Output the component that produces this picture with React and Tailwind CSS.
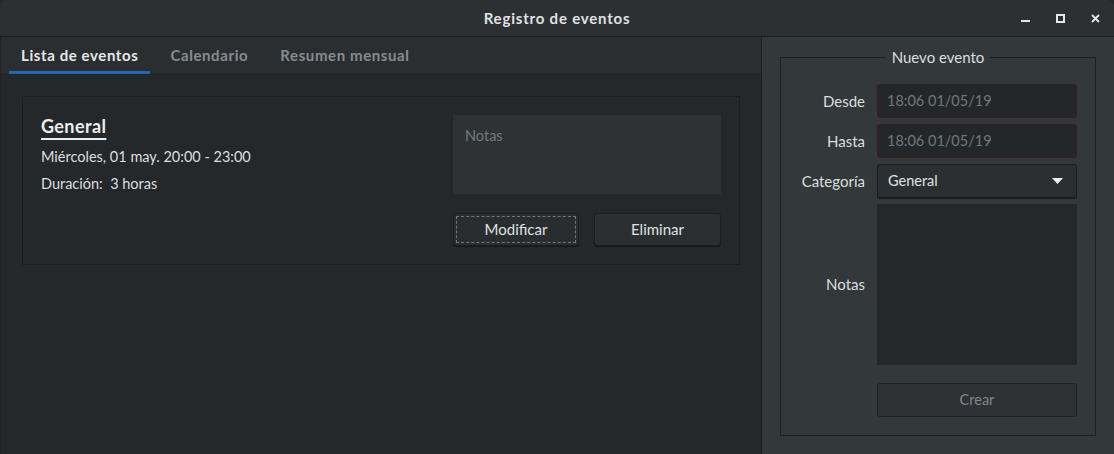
import React from "react";

const font = { fontFamily: "Lato, 'Noto Sans', sans-serif" };

const Field = ({ label, children, className = "" }) => (
  <div className={`flex items-center gap-3 ${className}`}>
    <span className="w-[84px] text-right text-[15px] text-[#dcdedf]">{label}</span>
    {children}
  </div>
);

const App = () => {
  return (
    <div
      className="w-[1114px] h-[454px] flex flex-col bg-[#25282b] text-[#dcdedf] overflow-hidden"
      style={font}
    >
      {/* Title bar */}
      <div className="relative h-[37px] shrink-0 bg-[#2d3033] border-b border-[#1a1c1e] rounded-t-[6px] flex items-center justify-center">
        <span className="text-[15px] font-bold tracking-[0.8px] text-[#e0e2e3]">Registro de eventos</span>
        <div className="absolute right-[14px] top-0 h-full flex items-center gap-[26px]">
          <svg width="9" height="9" viewBox="0 0 9 9">
            <rect x="0" y="6" width="9" height="2" fill="#e6e6e6" />
          </svg>
          <svg width="9" height="9" viewBox="0 0 9 9">
            <rect x="1" y="1" width="7" height="7" fill="none" stroke="#e6e6e6" strokeWidth="2" />
          </svg>
          <svg width="9" height="9" viewBox="0 0 9 9">
            <path d="M1 1 L8 8 M8 1 L1 8" stroke="#e6e6e6" strokeWidth="1.8" />
          </svg>
        </div>
      </div>

      <div className="flex flex-1 min-h-0">
        {/* Left pane */}
        <div className="w-[762px] shrink-0 flex flex-col border-r border-[#1c1f21] border-l border-l-[#202325]">
          <div className="h-[38px] shrink-0 bg-[#2b2e31] border-b border-[#1f2225] flex items-stretch pl-[8px] gap-2">
            <div className="px-3 flex items-center border-b-[3px] border-[#2766b2] pt-[3px] text-[15px] font-bold tracking-[0.6px] text-[#e6e8e9]">
              Lista de eventos
            </div>
            <div className="px-3 flex items-center text-[15px] font-bold tracking-[0.6px] text-[#878c90]">Calendario</div>
            <div className="px-3 flex items-center text-[15px] font-bold tracking-[0.6px] text-[#878c90]">Resumen mensual</div>
          </div>

          <div className="pl-[21px] pt-[21px]">
            <div className="w-[718px] h-[169px] border border-[#1b1e20] flex justify-between pl-[18px] pr-[18px] pt-[18px]">
              <div className="flex flex-col">
                <span className="text-[18px] font-bold tracking-[0.4px] text-[#eceeef] underline decoration-2 underline-offset-[5px] leading-[22px]">
                  General
                </span>
                <span className="mt-[10px] text-[14.5px] leading-[20px]">Miércoles, 01 may. 20:00 - 23:00</span>
                <span className="mt-[7px] text-[14.5px] leading-[20px]">Duración:&nbsp; 3 horas</span>
              </div>
              <div className="flex flex-col w-[268px]">
                <div className="h-[79px] bg-[#2e3235] px-3 pt-[10px] text-[14.5px] text-[#737a7e]">Notas</div>
                <div className="flex justify-between mt-[19px]">
                  <button className="w-[126px] h-[33px] rounded-[3px] bg-[#2a2d30] border border-[#1a1c1e] shadow-[0_1px_0_#17191a] p-[2px] text-[15px] text-[#dfe1e2]">
                    <div className="w-full h-full border border-dashed border-[#70767a] flex items-center justify-center">
                      Modificar
                    </div>
                  </button>
                  <button className="w-[127px] h-[33px] rounded-[3px] bg-[#2b2f32] border border-[#1a1c1e] shadow-[0_1px_0_#17191a] text-[15px] text-[#dfe1e2]">
                    Eliminar
                  </button>
                </div>
              </div>
            </div>
          </div>
        </div>

        {/* Right pane */}
        <div className="flex-1 bg-[#33383b] pl-[18px] pr-[18px] pt-[10px] pb-[18px] flex">
          <fieldset className="w-[316px] border border-[#1e2123] pb-[18px]">
            <legend className="mx-auto px-[6px] text-[15px] leading-[20px] text-[#dcdedf]">Nuevo evento</legend>
            <div className="flex flex-col gap-[6px] pt-[17px]">
              <Field label="Desde">
                <div className="w-[200px] h-[34px] rounded-[3px] bg-[#24272a] border border-[#3f1a1c] px-[9px] flex items-center text-[14.5px] text-[#70777b]">
                  18:06 01/05/19
                </div>
              </Field>
              <Field label="Hasta">
                <div className="w-[200px] h-[34px] rounded-[3px] bg-[#24272a] border border-[#3f1a1c] px-[9px] flex items-center text-[14.5px] text-[#70777b]">
                  18:06 01/05/19
                </div>
              </Field>
              <Field label="Categoría">
                <div className="w-[200px] h-[34px] rounded-[3px] bg-[#2b2f32] border border-[#1a1c1e] shadow-[0_1px_0_#1a1c1e] pl-[10px] pr-[13px] flex items-center justify-between text-[14.5px] text-[#e0e2e3]">
                  General
                  <svg width="11" height="6" viewBox="0 0 11 6">
                    <path d="M0 0 H11 L5.5 6 Z" fill="#eeeeee" />
                  </svg>
                </div>
              </Field>
              <Field label="Notas">
                <div className="w-[200px] h-[161px] bg-[#25282b]" />
              </Field>
              <div className="flex gap-3 mt-[12px]">
                <span className="w-[84px]" />
                <button className="w-[200px] h-[34px] rounded-[3px] bg-[#2e3235] border border-[#1e2123] text-[14.5px] text-[#80878b]">
                  Crear
                </button>
              </div>
            </div>
          </fieldset>
        </div>
      </div>
    </div>
  );
};

export default App;
